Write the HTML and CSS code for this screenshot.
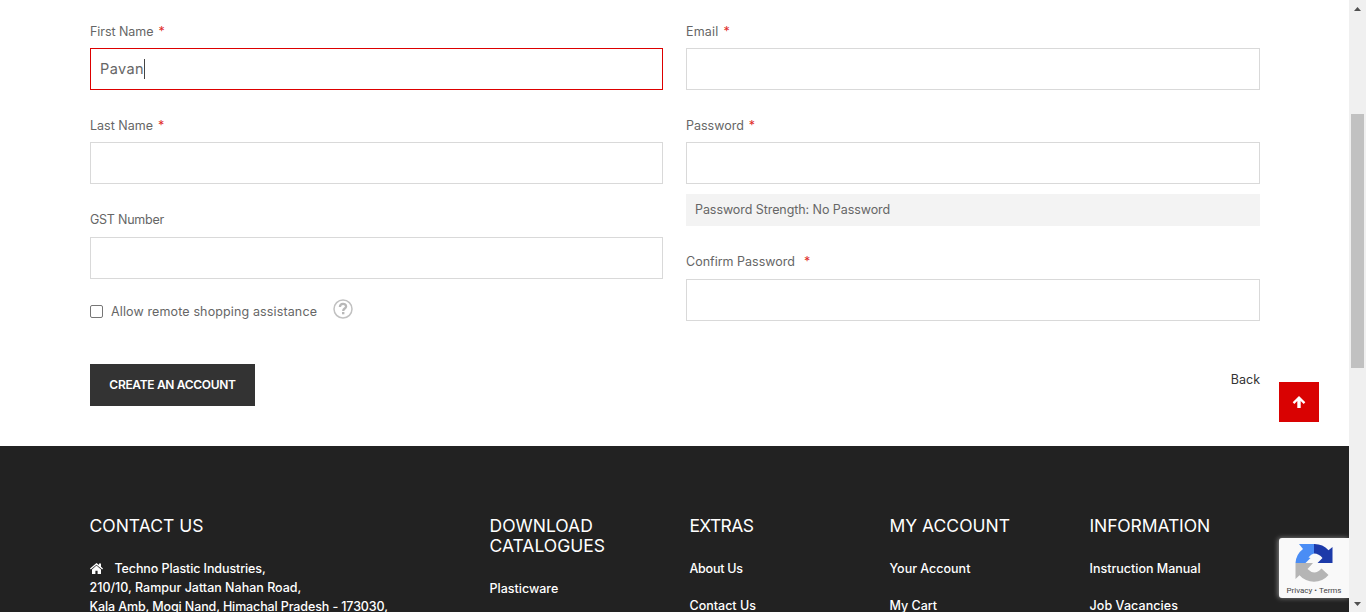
FILE: index.html
```html
<!DOCTYPE html>
<html lang="en">
<head>
<meta charset="utf-8">
<title>Create an Account</title>
<link rel="stylesheet" href="styles.css">
</head>
<body>
<div class="page">
  <main class="register">
    <div class="columns">
      <div class="column">
        <div class="field"><label class="label first">First Name</label><span class="req">*</span>
          <div class="input input-focus"><span class="value">Pavan</span><span class="caret"></span></div></div>
        <div class="field"><label class="label">Last Name</label><span class="req">*</span>
          <div class="input"></div></div>
        <div class="field field-gst"><label class="label gst">GST Number</label>
          <div class="input"></div></div>
        <div class="assist">
          <span class="checkbox"></span><span class="label allow">Allow remote shopping assistance</span>
          <svg class="help" viewBox="0 0 20 20"><circle cx="10" cy="10" r="9" fill="none" stroke="#c1c1c1" stroke-width="1.5"/><path d="M6.9 8C7 3.9 13.1 4 13.1 7.4C13.1 9.5 10.2 9.5 10.2 11.9" fill="none" stroke="#b8b8b8" stroke-width="2.3"/><rect x="9" y="13" width="2.4" height="2.3" fill="#b8b8b8"/></svg>
        </div>
      </div>
      <div class="column">
        <div class="field"><label class="label email">Email</label><span class="req">*</span>
          <div class="input"></div></div>
        <div class="field field-password"><label class="label">Password</label><span class="req">*</span>
          <div class="input"></div></div>
        <div class="strength"><span class="strength-text">Password Strength: No Password</span></div>
        <div class="field field-confirm"><label class="label">Confirm Password</label><span class="req req-wide">*</span>
          <div class="input"></div></div>
      </div>
    </div>
    <div class="actions">
      <button class="submit"><span>CREATE AN ACCOUNT</span></button>
      <a class="back">Back</a>
    </div>
  </main>
  <footer class="footer">
    <section class="contact">
      <h2 class="h-contact">CONTACT US</h2>
      <div class="address">
        <div class="line line-1"><svg class="home" viewBox="0 0 13 11"><path d="M6.5 0L9 2.1V.6H11V3.8L13 5.6L12.2 6.5L6.5 1.7L.8 6.5L0 5.6Z"/><path d="M6.5 2.6L11 6.4V11H7.6V7.7H5.4V11H2V6.4Z"/></svg><span>Techno Plastic Industries,</span></div>
        <div class="line line-2">210/10, Rampur Jattan Nahan Road,</div>
        <div class="line line-3">Kala Amb, Mogi Nand, Himachal Pradesh - 173030,</div>
      </div>
    </section>
    <section>
      <h2>DOWNLOAD<br>CATALOGUES</h2>
      <a class="link">Plasticware</a>
    </section>
    <section>
      <h2 class="h-extras">EXTRAS</h2>
      <a class="link link-about">About Us</a>
      <a class="link">Contact Us</a>
    </section>
    <section>
      <h2>MY ACCOUNT</h2>
      <a class="link">Your Account</a>
      <a class="link">My Cart</a>
    </section>
    <section>
      <h2 class="h-info">INFORMATION</h2>
      <a class="link">Instruction Manual</a>
      <a class="link link-jobs">Job Vacancies</a>
    </section>
  </footer>
</div>
<div class="scrollbar">
  <svg class="arrow" viewBox="0 0 7 4"><path d="M0 4L3.5 0L7 4Z"/></svg>
  <div class="thumb"></div>
  <svg class="arrow arrow-down" viewBox="0 0 7 4"><path d="M0 0H7L3.5 4Z"/></svg>
</div>
<a class="to-top"><svg viewBox="0 0 14 12"><path d="M7 0L13.3 6.2L11.7 7.9L8.7 5.1V12H5.3V5.1L2.3 7.9L.7 6.2Z" fill="#fff"/></svg></a>
<div class="recaptcha">
  <svg viewBox="0 0 40 40"><path d="M20 1A19 19 0 0 1 34.5 7.2L38.5 4V20H23.5L28.5 15Q25 10.5 20 10.5Z" fill="#1c3aa9"/><path d="M20 1H5L9 6A19 19 0 0 0 1.5 20H11.5L16.5 15L14.5 14.5Q17 10.8 20 10.5Z" fill="#4a8df5"/><path d="M1.5 20V36L5.5 32.2A19 19 0 0 0 34.5 32L27.5 25.5Q20.5 33 13.5 26L19 20Z" fill="#b5b5b5"/></svg>
  <span>Privacy&nbsp;•&nbsp;Terms</span>
</div>
</body>
</html>
```

FILE: styles.css
```css
* { box-sizing: border-box; }
body {
  margin: 0;
  height: 612px;
  overflow: hidden;
  display: flex;
  background: #fff;
  color: #666;
  font: 12.5px/20px Inter, "Noto Sans", sans-serif;
  white-space: nowrap;
}
.page { width: 1349px; height: 612px; overflow: hidden; display: flex; flex-direction: column; }
.register { height: 446px; flex: none; padding: 22px 89px 0 90px; }
.columns { display: flex; gap: 23px; height: 342px; }
.column { width: 573px; }
.column + .column { width: 574px; }
.field { height: 94px; }
.field-gst { height: 95px; }
.field-gst .input, .field-confirm .input { margin-top: 7px; }
.field-password { height: 78px; }
.label { display: inline-block; }
.first { letter-spacing: -.06px; }
.gst { letter-spacing: -.24px; }
.allow { letter-spacing: .13px; }
.email { letter-spacing: .2px; }
.req { color: #e02b27; margin-left: 5px; }
.req-wide { margin-left: 9px; }
.input { height: 42px; margin-top: 6px; border: 1px solid #d9d9d9; padding: 0 9px; display: flex; align-items: center; }
.input-focus { border-color: #d00; }
.value { font-size: 14.5px; letter-spacing: .4px; }
.caret { width: 1px; height: 20px; background: #444; }
.assist { display: flex; height: 20px; margin-top: -3px; }
.checkbox { width: 13px; height: 13px; border: 1px solid #767676; border-radius: 2px; margin: 3px 8px 0 0; }
.help { width: 20px; height: 20px; margin: -3px 0 0 16px; }
.strength { height: 32px; background: #f3f3f3; padding: 6px 9px; margin-bottom: 26px; }
.strength-text { letter-spacing: -.07px; }
.actions { display: flex; justify-content: space-between; }
.submit { width: 165px; height: 42px; border: 0; background: #333; color: #fff; font: 600 12px/20px Inter, sans-serif; letter-spacing: -.32px; padding: 0; white-space: nowrap; }
.back { color: #333; margin-top: 6px; }
.footer {
  flex: 1;
  background: #222;
  color: #fff;
  padding: 70px 0 0 89.5px;
  display: grid;
  grid-template-columns: 400px 200px 200px 200px 200px;
  font-weight: 500;
}
h2 { margin: 0 0 23px; font-size: 17.5px; line-height: 20px; font-weight: 400; }
.h-extras { letter-spacing: -.65px; }
.h-info { letter-spacing: -.12px; }
.link { display: block; height: 37px; line-height: 20px; }
.link-about { letter-spacing: -.25px; }
.link-jobs { letter-spacing: .08px; }
.address { line-height: 19px; }
.line { height: 19px; }
.line-1 { display: flex; letter-spacing: -.1px; }
.line-3 { letter-spacing: -.12px; }
.home { width: 13px; height: 11px; fill: #fff; margin: 4px 12px 0 0; }
.scrollbar { width: 17px; height: 612px; background: #f0f0f0; display: flex; flex-direction: column; align-items: center; padding: 7px 0 6px; }
.arrow { width: 7px; height: 4px; fill: #505050; flex: none; }
.thumb { width: 13px; height: 254px; margin-top: 103px; background: #c1c1c1; }
.arrow-down { margin-top: auto; }
.to-top { position: absolute; left: 1279px; top: 382px; width: 40px; height: 40px; background: #d90202; display: grid; place-items: center; }
.to-top svg { width: 14px; height: 12px; }
.recaptcha { position: absolute; left: 1279px; top: 538px; width: 70px; height: 60px; background: #f9f9f9; border-radius: 3px 0 0 3px; box-shadow: -1px 0 5px #888; clip-path: inset(-8px 0 -8px -8px); color: #444; font: 8px/10px Roboto, sans-serif; text-align: center; }
.recaptcha svg { display: block; width: 40px; height: 40px; margin: 5px 0 3px 15px; }
```
